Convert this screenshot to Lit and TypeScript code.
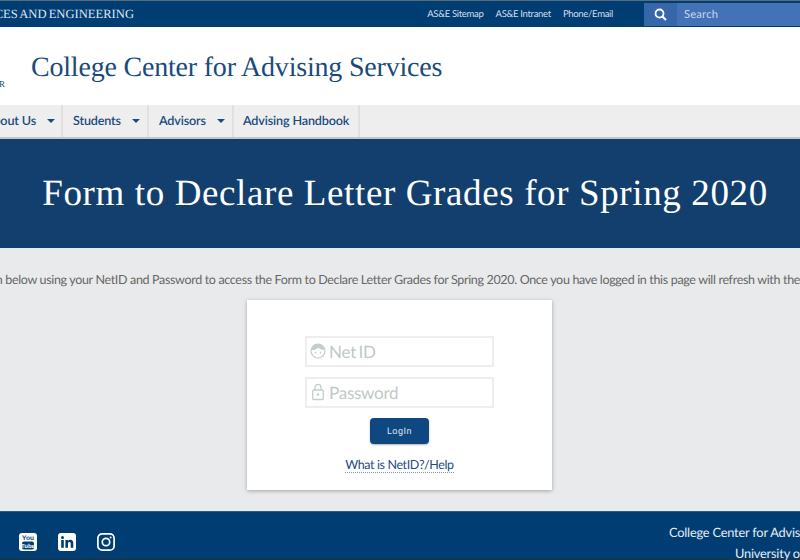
import { LitElement, html, css } from 'lit';
import { customElement } from 'lit/decorators.js';

const NAV = [
  { label: 'About Us', caret: true, cls: 'first' },
  { label: 'Students', caret: true, cls: 'students' },
  { label: 'Advisors', caret: true, cls: 'advisors' },
  { label: 'Advising Handbook', caret: false, cls: 'handbook' },
];

@customElement('app-root')
export class AppRoot extends LitElement {
  static styles = css`
    :host {
      display: block;
      width: 800px;
      height: 560px;
      overflow: hidden;
      background: #e9eaec;
      font-family: Lato, sans-serif;
      text-rendering: geometricPrecision;
    }
    .topbar {
      height: 26px;
      border-top: 1px solid #5c6b78;
      background: #003d73;
      display: flex;
      align-items: center;
      color: #fff;
    }
    .school {
      width: 134px;
      flex: none;
      display: flex;
      justify-content: flex-end;
      overflow: hidden;
      white-space: nowrap;
      font-family: 'Liberation Serif', serif;
      font-size: 12.6px;
      word-spacing: -1px;
      color: #dfe6ee;
    }
    .quick {
      margin-left: auto;
      display: flex;
      gap: 12px;
      padding-right: 31px;
      font-size: 9.5px;
      letter-spacing: -0.3px;
      color: #d5dfeb;
    }
    .search {
      width: 156px;
      height: 23px;
      flex: none;
      display: flex;
      margin-top: 1px;
    }
    .search-btn {
      width: 33px;
      background: #3567a9;
      display: flex;
      align-items: center;
      justify-content: center;
    }
    .search-field {
      flex: 1;
      background: #4372b6;
      color: #c9d6ea;
      font-size: 11.2px;
      line-height: 23px;
      padding-left: 7px;
      letter-spacing: 0.2px;
    }
    .brand {
      height: 78px;
      background: #fff;
      display: flex;
      color: #1a4a7c;
    }
    .logo {
      width: 31px;
      flex: none;
      overflow: hidden;
      display: flex;
      justify-content: flex-end;
      align-items: flex-end;
      font-family: 'Liberation Serif', serif;
      font-size: 9px;
      line-height: 15px;
      padding-bottom: 13px;
      box-sizing: border-box;
    }
    .logo span {
      margin-right: 26px;
    }
    .site-name {
      font-family: 'Liberation Serif', serif;
      font-size: 28px;
      line-height: 82px;
      white-space: nowrap;
      letter-spacing: -0.2px;
    }
    .nav {
      height: 34px;
      background: #eee;
      display: flex;
      border-bottom: 2px solid #c3c6c9;
      box-sizing: border-box;
      color: #1b4a7d;
      font-size: 12.6px;
      letter-spacing: -0.15px;
      font-weight: 600;
    }
    .nav-item {
      display: flex;
      align-items: center;
      border-right: 2px solid #e0e0e0;
      padding: 0 10px 1px;
      white-space: nowrap;
      flex: none;
      box-sizing: border-box;
    }
    .nav-item.first {
      width: 63px;
      justify-content: flex-end;
      padding: 0 6px 1px 0;
    }
    .nav-item.students {
      width: 86px;
    }
    .nav-item.advisors {
      width: 85px;
    }
    .nav-item.handbook {
      padding: 0 9px 1px;
    }
    .caret {
      width: 0;
      height: 0;
      margin-left: auto;
      margin-right: -3px;
      border-left: 4px solid transparent;
      border-right: 4px solid transparent;
      border-top: 4px solid #1b4a7d;
    }
    .first .caret {
      margin-left: 11px;
      margin-right: 0;
    }
    .hero {
      height: 109px;
      background: #123f6d;
      color: #fff;
      display: flex;
      align-items: center;
      justify-content: center;
      font-family: 'Liberation Serif', serif;
      font-size: 37px;
      white-space: nowrap;
      letter-spacing: 0.62px;
      padding: 0 0 0 10px;
      box-sizing: border-box;
    }
    .main {
      height: 263px;
      display: flex;
      flex-direction: column;
      align-items: center;
    }
    .intro {
      align-self: flex-start;
      margin: 24px 0 0 -58.5px;
      font-size: 12.5px;
      letter-spacing: -0.335px;
      line-height: 16px;
      color: #666;
      white-space: nowrap;
    }
    .card {
      width: 305px;
      height: 190px;
      margin: 12px 0 0 -1px;
      background: #fff;
      box-shadow: 0 1px 4px rgba(0, 0, 0, 0.3);
      display: flex;
      flex-direction: column;
      align-items: center;
      padding-top: 36px;
      box-sizing: border-box;
    }
    .field {
      width: 189px;
      height: 31px;
      border: 2px solid #eee;
      box-sizing: border-box;
      display: flex;
      align-items: center;
      color: #bfc9c9;
      font-size: 17px;
      letter-spacing: -0.25px;
      word-spacing: -1.5px;
      margin-bottom: 10px;
    }
    .field svg {
      width: 16px;
      height: 18px;
      margin: 0 3px 2px 3px;
      flex: none;
    }
    .login {
      width: 59px;
      height: 26px;
      background: #0f4880;
      color: #dfe6ef;
      border-radius: 4px;
      box-shadow: 0 1px 2px rgba(0, 0, 0, 0.3);
      font-family: Roboto, sans-serif;
      font-size: 9px;
      letter-spacing: 0.5px;
      line-height: 28px;
      text-align: center;
    }
    .help {
      margin-top: 13px;
      font-size: 12.5px;
      letter-spacing: -0.39px;
      line-height: 15px;
      color: #1f4b80;
      border-bottom: 1px dotted #7f98b5;
    }
    .footer {
      height: 49px;
      background: #003d73;
      border-top: 1px solid #2e5a86;
      border-bottom: 1px solid #2a2f35;
      box-sizing: border-box;
      display: flex;
      color: #e6ecf3;
    }
    .social {
      display: flex;
      gap: 21px;
      padding: 21px 0 0 19px;
    }
    .social svg {
      width: 18px;
      height: 18px;
      display: block;
    }
    .address {
      margin-left: auto;
      flex: none;
      width: 131px;
      font-size: 12.8px;
      letter-spacing: -0.2px;
      line-height: 21px;
      padding-top: 10px;
      white-space: nowrap;
    }
    .address span {
      display: block;
    }
    .address .second {
      padding-left: 66px;
    }
  `;

  render() {
    return html`
      <div class="topbar">
        <div class="school"><span>COLLEGE OF ARTS, SCIENCES AND ENGINEERING</span></div>
        <div class="quick">
          <span>AS&amp;E Sitemap</span><span>AS&amp;E Intranet</span><span>Phone/Email</span>
        </div>
        <div class="search">
          <div class="search-btn">
            <svg width="13" height="13" viewBox="0 0 13 13" fill="none" stroke="#fff">
              <circle cx="5.5" cy="5.5" r="4" stroke-width="1.8"></circle>
              <path d="M8.5 8.5l3.5 3.5" stroke-width="2.2"></path>
            </svg>
          </div>
          <div class="search-field">Search</div>
        </div>
      </div>
      <div class="brand">
        <div class="logo"><span>R</span></div>
        <div class="site-name">College Center for Advising Services</div>
      </div>
      <div class="nav">
        ${NAV.map(
          (item) => html`
            <div class="nav-item ${item.cls}">
              ${item.label}${item.caret ? html`<span class="caret"></span>` : ''}
            </div>
          `
        )}
      </div>
      <div class="hero">Form to Declare Letter Grades for Spring 2020</div>
      <div class="main">
        <div class="intro">
          Please login below using your NetID and Password to access the Form to Declare Letter
          Grades for Spring 2020. Once you have logged in this page will refresh with the form.
        </div>
        <div class="card">
          <div class="field">
            <svg viewBox="0 0 16 18" fill="none" stroke="#c4cdcd" stroke-width="1.2">
              <circle cx="8" cy="9" r="7"></circle>
              <path d="M1.2 8C4.5 8 7 7 8.4 5.4c1.2 1.7 3.4 2.6 6.4 2.5C14 4.3 11.5 2 8 2S2 4.3 1.2 8z" fill="#c4cdcd" stroke="none"></path>
              <circle cx="5.5" cy="10.6" r=".9" fill="#c4cdcd" stroke="none"></circle>
              <circle cx="10.5" cy="10.6" r=".9" fill="#c4cdcd" stroke="none"></circle>
            </svg>
            Net ID
          </div>
          <div class="field">
            <svg viewBox="0 0 16 18" fill="none" stroke="#c4cdcd" stroke-width="1.3">
              <rect x="2.7" y="7" width="10.6" height="9.5" rx="1"></rect>
              <path d="M5 7V4.4a3 3 0 0 1 6 0V7"></path>
              <circle cx="8" cy="11.5" r="1.2" fill="#c4cdcd" stroke="none"></circle>
            </svg>
            Password
          </div>
          <div class="login">LogIn</div>
          <div class="help">What is NetID?/Help</div>
        </div>
      </div>
      <div class="footer">
        <div class="social">
          <svg viewBox="0 0 18 18">
            <rect width="18" height="18" rx="3" fill="#fff"></rect>
            <rect x="3" y="8.5" width="12" height="8" rx="2" fill="#003d73"></rect>
            <text x="9" y="7" text-anchor="middle" font-family="Liberation Sans, sans-serif" font-size="6.5" font-weight="700" fill="#003d73">You</text>
            <text x="9" y="14.6" text-anchor="middle" font-family="Liberation Sans, sans-serif" font-size="6" font-weight="700" fill="#fff">Tube</text>
          </svg>
          <svg viewBox="0 0 18 18">
            <rect width="18" height="18" rx="3" fill="#fff"></rect>
            <rect x="3.2" y="7" width="2.6" height="7.8" fill="#003d73"></rect>
            <circle cx="4.5" cy="4.6" r="1.5" fill="#003d73"></circle>
            <path d="M7.4 7h2.5v1.1c.5-.8 1.4-1.3 2.5-1.3 2 0 2.9 1.3 2.9 3.4v4.6h-2.6v-4.1c0-1.1-.4-1.7-1.3-1.7-1 0-1.4.7-1.4 1.7v4.1H7.4z" fill="#003d73"></path>
          </svg>
          <svg viewBox="0 0 18 18" fill="none" stroke="#fff">
            <rect x=".9" y=".9" width="16.2" height="16.2" rx="4.2" stroke-width="1.7"></rect>
            <circle cx="9" cy="9" r="3.7" stroke-width="1.7"></circle>
            <circle cx="13.6" cy="4.4" r="1" fill="#fff" stroke="none"></circle>
          </svg>
        </div>
        <div class="address">
          <span>College Center for Advising Services</span>
          <span class="second">University of Rochester</span>
        </div>
      </div>
    `;
  }
}
